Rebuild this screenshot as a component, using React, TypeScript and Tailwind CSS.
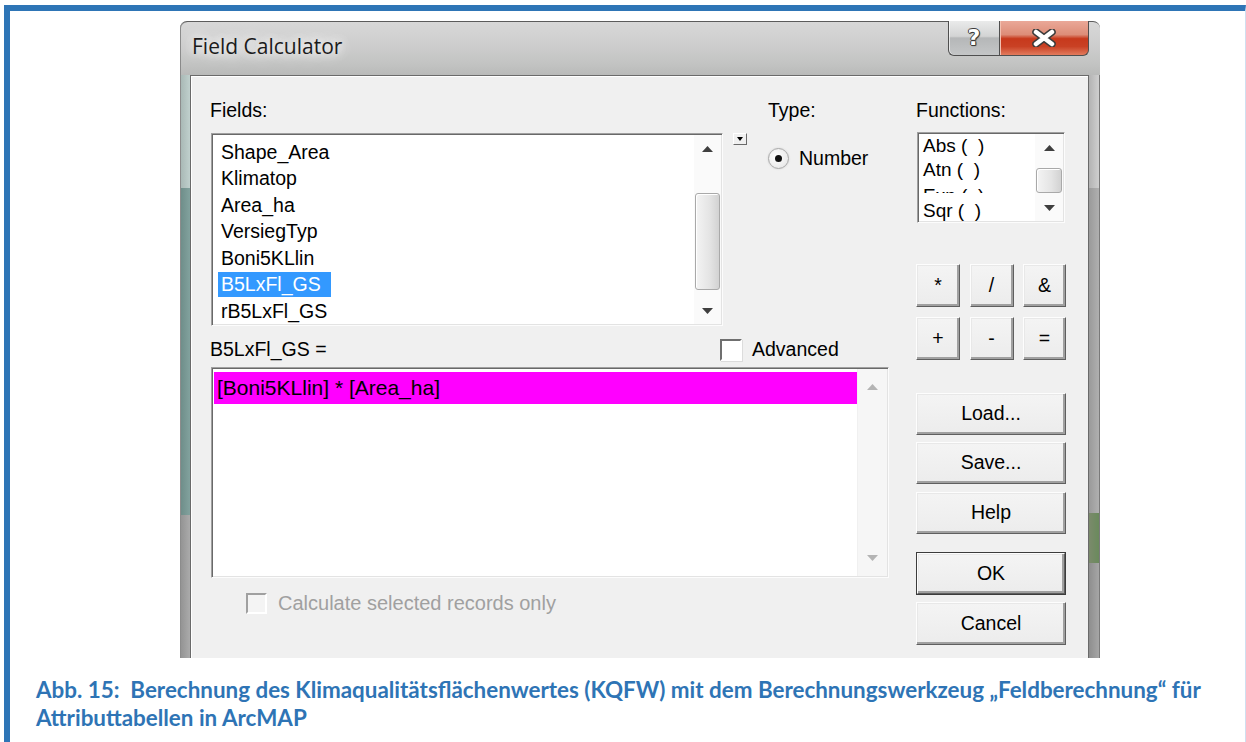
import React from "react";

const SANS = '"Liberation Sans", Arial, sans-serif';

const fields = [
  "Shape_Area",
  "Klimatop",
  "Area_ha",
  "VersiegTyp",
  "Boni5KLlin",
  "B5LxFl_GS",
  "rB5LxFl_GS",
];

function Arrow({ dir, color }: { dir: "up" | "down"; color: string }) {
  return (
    <svg width="11" height="6" viewBox="0 0 11 6">
      {dir === "up" ? (
        <path d="M0 6 L5.5 0 L11 6 Z" fill={color} />
      ) : (
        <path d="M0 0 L5.5 6 L11 0 Z" fill={color} />
      )}
    </svg>
  );
}

function Thumb({ className }: { className: string }) {
  return (
    <div
      className={`${className} mx-[1px] rounded-[3px] border border-[#a9a9a9] bg-[linear-gradient(to_right,#f4f4f4,#e4e4e4_60%,#d2d2d2)] shadow-[inset_1px_1px_0_#ffffff]`}
    />
  );
}

// Sunken list/edit frame used by the list boxes
const sunken =
  "bg-white border border-t-[#a0a0a0] border-l-[#a0a0a0] border-r-[#fcfcfc] border-b-[#fcfcfc] shadow-[inset_1px_1px_0_#696969,inset_-1px_-1px_0_#e3e3e3]";

function RaisedButton({
  label,
  className,
  isDefault,
}: {
  label: string;
  className: string;
  isDefault?: boolean;
}) {
  return (
    <div
      className={`${className} ${
        isDefault ? "border border-[#3c3c3c]" : ""
      } flex`}
    >
      <div className="flex-1 flex items-center justify-center bg-[linear-gradient(#f4f4f4,#ececec)] border border-t-[#fdfdfd] border-l-[#fdfdfd] border-r-[#5f5f5f] border-b-[#5f5f5f] shadow-[inset_-2px_-2px_0_#a0a0a0,inset_1px_1px_0_#e8e8e8] text-[19.5px] text-black">
        {label}
      </div>
    </div>
  );
}

function TitleBar() {
  return (
    <div className="h-[54px] flex items-start justify-between bg-[linear-gradient(#d8d8d8,#cdcdcd_45%,#c2c3c2_80%,#b9bab9)] rounded-t-[7px] border-t border-[#5c5c5c] shadow-[inset_1px_0_0_#8a8a8a]">
      <div
        className="ml-[12px] mt-[10px] text-[21px] leading-[28px] text-[#1b1b1b] [text-shadow:0_0_8px_#ffffff,0_0_14px_#f4f4f4,0_0_20px_#eeeeee]"
        style={{ fontFamily: '"Open Sans", "Noto Sans", sans-serif' }}
      >
        Field Calculator
      </div>
      <div className="flex mr-[11px] -mt-px">
        <div className="w-[51px] h-[35px] flex items-center justify-center rounded-bl-[6px] border border-t-0 border-r-0 border-[#4f4f4f] bg-[linear-gradient(#eaebeb,#d3d4d4_45%,#b5b7b8_50%,#c4c6c7)] shadow-[inset_1px_0_0_#ffffffa0]">
          <span
            className="text-[22px] font-bold leading-none text-white [text-shadow:1px_0_0_#3a3a3a,-1px_0_0_#3a3a3a,0_1px_0_#3a3a3a,0_-1px_0_#3a3a3a,1px_1px_1px_#3a3a3a]"
            style={{ fontFamily: '"DejaVu Sans", sans-serif' }}
          >
            ?
          </span>
        </div>
        <div className="w-[90px] h-[35px] flex items-center justify-center rounded-br-[6px] border border-t-0 border-[#4f4f4f] bg-[linear-gradient(#eaa898,#dd8d78_40%,#c7391c_52%,#c94124_75%,#e27b5d)] shadow-[inset_1px_0_0_#f3c0b0]">
          <svg width="26" height="18" viewBox="0 0 26 18">
            <path d="M5 3 L21 15 M21 3 L5 15" stroke="#3b3b3b" strokeWidth="7.5" strokeLinecap="round" />
            <path d="M5 3 L21 15 M21 3 L5 15" stroke="#ffffff" strokeWidth="4.5" strokeLinecap="round" />
          </svg>
        </div>
      </div>
    </div>
  );
}

function FieldsList() {
  return (
    <div className={`w-[512px] h-[193px] flex ${sunken}`}>
      <div className="flex-1 pt-[5px] pl-[6px]">
        {fields.map((f) => (
          <div key={f} className="h-[26.5px] flex items-center">
            <span
              className={`h-[25px] leading-[25px] px-[3px] ${
                f === "B5LxFl_GS" ? "bg-[#3399ff] text-white pr-[10px]" : "text-black"
              }`}
            >
              {f}
            </span>
          </div>
        ))}
      </div>
      <div className="w-[27px] my-[1px] mr-[1px] flex flex-col bg-[#fafafa]">
        <div className="h-[27px] flex items-center justify-center">
          <Arrow dir="up" color="#3f3f3f" />
        </div>
        <div className="flex-1 flex flex-col">
          <Thumb className="mt-[31px] h-[97px]" />
        </div>
        <div className="h-[27px] flex items-center justify-center">
          <Arrow dir="down" color="#3f3f3f" />
        </div>
      </div>
    </div>
  );
}

function FunctionsList() {
  return (
    <div className={`ml-px w-[148px] h-[91px] flex ${sunken}`}>
      <div className="flex-1 pl-[5px] pt-[1px] overflow-hidden text-[19px] text-black">
        <div className="h-[24px] leading-[24px] whitespace-pre">Abs (  )</div>
        <div className="h-[24px] leading-[24px] whitespace-pre">Atn (  )</div>
        {/* row partly painted over by the next one */}
        <div className="h-[17px] overflow-hidden">
          <div className="h-[6px] mt-[5px] overflow-hidden">
            <div className="leading-[24px] whitespace-pre -mt-[3px]">Exp (  )</div>
          </div>
        </div>
        <div className="h-[24px] leading-[24px] whitespace-pre">Sqr (  )</div>
      </div>
      <div className="w-[28px] my-[1px] mr-[1px] flex flex-col bg-[#fafafa]">
        <div className="h-[28px] flex items-center justify-center">
          <Arrow dir="up" color="#3f3f3f" />
        </div>
        <div className="flex-1 flex flex-col">
          <Thumb className="mt-[6px] h-[25px]" />
        </div>
        <div className="h-[27px] flex items-center justify-center">
          <Arrow dir="down" color="#3f3f3f" />
        </div>
      </div>
    </div>
  );
}

function ExpressionBox() {
  return (
    <div className={`w-[678px] h-[211px] flex ${sunken}`}>
      <div className="flex-1 pt-[4px] pl-[2px]">
        <div className="h-[32px] bg-[#ff00ff] pl-[3px] text-[21px] leading-[32px] text-black">
          [Boni5KLlin] * [Area_ha]
        </div>
      </div>
      <div className="w-[30px] my-[1px] mr-[1px] flex flex-col justify-between bg-[#f6f6f6] border-l border-[#f0f0f0]">
        <div className="h-[36px] flex items-center justify-center">
          <Arrow dir="up" color="#b4b4b4" />
        </div>
        <div className="h-[36px] flex items-center justify-center">
          <Arrow dir="down" color="#b4b4b4" />
        </div>
      </div>
    </div>
  );
}

function Client() {
  return (
    <div
      className="w-[899px] h-[583px] bg-[#f0f0f0] border border-b-0 border-[#6a6a6a] shadow-[inset_1px_1px_0_#ffffff] flex pl-[20px] pt-[23px] text-[19.5px] text-black"
      style={{ fontFamily: SANS }}
    >
      {/* left column: fields, type, expression */}
      <div className="w-[678px] flex flex-col">
        <div className="flex">
          <div className="flex flex-col">
            <div className="h-[22px] leading-[22px] -ml-px">Fields:</div>
            <div className="mt-[12px]">
              <FieldsList />
            </div>
          </div>
          <div className="ml-[10px] mt-[34px] w-[14px] h-[12px] bg-[#f0f0f0] border border-t-white border-l-white border-r-[#6a6a6a] border-b-[#6a6a6a] flex items-center justify-center">
            <svg width="6" height="4" viewBox="0 0 6 4">
              <path d="M0 0 L3 4 L6 0 Z" fill="#000" />
            </svg>
          </div>
          <div className="ml-[21px] flex flex-col">
            <div className="h-[22px] leading-[22px]">Type:</div>
            <div className="mt-[26px] flex items-center">
              <div className="w-[21px] h-[21px] rounded-full border border-[#a8a8a8] bg-[radial-gradient(circle_at_40%_40%,#ffffff,#e2e2e2)] flex items-center justify-center shadow-[0_0_2px_#d0d0d0]">
                <div className="w-[7px] h-[7px] rounded-full bg-[#111]" />
              </div>
              <span className="ml-[10px] leading-[22px]">Number</span>
            </div>
          </div>
        </div>

        <div className="h-[41px] pt-[6px] flex items-center">
          <div className="w-[510px] -ml-px">B5LxFl_GS =</div>
          <div className="w-[22px] h-[22px] bg-white border-2 border-t-[#6f6f6f] border-l-[#6f6f6f] border-r-white border-b-white shadow-[1px_1px_0_#dcdcdc]" />
          <span className="ml-[10px]">Advanced</span>
        </div>

        <ExpressionBox />

        <div className="mt-[14px] ml-[35px] flex items-center">
          <div className="w-[21px] h-[21px] bg-[#f4f4f4] border-2 border-t-[#a0a0a0] border-l-[#a0a0a0] border-r-white border-b-white" />
          <span className="ml-[11px] text-[20px] leading-[22px] text-[#a0a0a0]">Calculate selected records only</span>
        </div>
      </div>

      {/* right column: functions, operators, commands */}
      <div className="ml-[27px] w-[150px] flex flex-col">
        <div className="h-[22px] leading-[22px]">Functions:</div>
        <div className="mt-[11px]">
          <FunctionsList />
        </div>
        <div className="mt-[41px] flex justify-between">
          <RaisedButton label="*" className="w-[44px] h-[43px]" />
          <RaisedButton label="/" className="w-[44px] h-[43px]" />
          <RaisedButton label="&" className="w-[43px] h-[43px]" />
        </div>
        <div className="mt-[10px] flex justify-between">
          <RaisedButton label="+" className="w-[44px] h-[43px]" />
          <RaisedButton label="-" className="w-[44px] h-[43px]" />
          <RaisedButton label="=" className="w-[43px] h-[43px]" />
        </div>
        <RaisedButton label="Load..." className="mt-[33px] h-[42px]" />
        <RaisedButton label="Save..." className="mt-[7px] h-[42px]" />
        <RaisedButton label="Help" className="mt-[8px] h-[42px]" />
        <RaisedButton label="OK" className="mt-[18px] h-[43px]" isDefault />
        <RaisedButton label="Cancel" className="mt-[7px] h-[43px]" />
      </div>
    </div>
  );
}

function Dialog() {
  return (
    <div className="ml-[170px] w-[920px] h-[637px] flex flex-col">
      <TitleBar />
      <div className="flex">
        {/* left window frame */}
        <div className="w-[10px] h-[583px] flex flex-col border-l border-[#8c8c8c]">
          <div className="h-[113px] bg-[linear-gradient(to_right,#a9b9b6,#c0d0cd)]" />
          <div className="h-[327px] bg-[linear-gradient(to_right,#6f8e8a,#82a29e)]" />
          <div className="flex-1 bg-[linear-gradient(to_right,#949494,#ababab)]" />
        </div>
        <Client />
        {/* right window frame */}
        <div className="w-[11px] h-[583px] flex flex-col border-r border-[#7a7a7a]">
          <div className="h-[113px] bg-[linear-gradient(to_right,#b3b3b3,#cfcfcf)]" />
          <div className="h-[325px] bg-[linear-gradient(to_right,#9a9a9a,#b0b0b0)]" />
          <div className="h-[50px] bg-[linear-gradient(to_right,#7b8a6c,#6a8a5c)]" />
          <div className="flex-1 bg-[linear-gradient(to_right,#8e8e8e,#a6a6a6)]" />
        </div>
      </div>
    </div>
  );
}

export default function App() {
  return (
    <div className="w-[1246px] h-[742px] bg-white overflow-hidden">
      <div className="ml-[4px] mt-[5px] w-[1242px] h-[737px] border-t-[6px] border-l-[6px] border-r border-t-[#2e75b6] border-l-[#2e75b6] border-r-[#cfdff0] pt-[10px] flex flex-col">
        <Dialog />
        <div
          className="ml-[26px] mt-[18px] text-[22.4px] leading-[28px] font-bold text-[#2e74b5] whitespace-pre"
          style={{ fontFamily: 'Lato, "Open Sans", sans-serif' }}
        >
          <div>Abb. 15:  Berechnung des Klimaqualitätsflächenwertes (KQFW) mit dem Berechnungswerkzeug „Feldberechnung“ für</div>
          <div>Attributtabellen in ArcMAP</div>
        </div>
      </div>
    </div>
  );
}
